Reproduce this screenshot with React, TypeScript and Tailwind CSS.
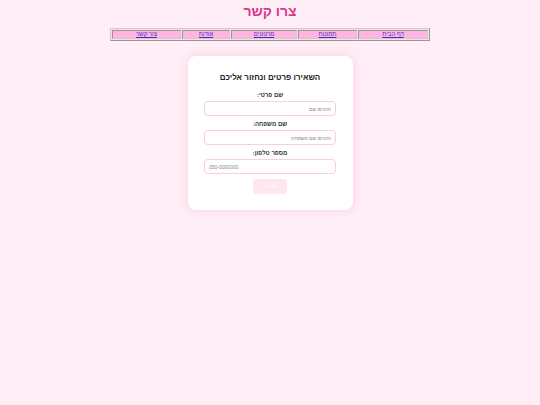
const links = [
  { label: "דף הבית", w: "w-[70px]" },
  { label: "תמונות", w: "w-[59px]" },
  { label: "סרטונים", w: "w-[66px]" },
  { label: "אודות", w: "w-[48px]" },
  { label: "צור קשר", w: "w-[69px]" },
];

const fields = [
  { label: "שם פרטי:", placeholder: "הכניסו שם", ltr: false },
  { label: "שם משפחה:", placeholder: "הכניסו שם משפחה", ltr: false },
  { label: "מספר טלפון:", placeholder: "050-0000000", ltr: true },
];

export default function App() {
  return (
    <div
      dir="rtl"
      className="min-h-[405px] w-full bg-[#ffeef6] font-['Liberation_Sans',Arial,sans-serif] text-black"
    >
      <h1 className="pt-[3px] text-center text-[14px] font-bold leading-[16px] text-[#d63a8c]">
        צרו קשר
      </h1>

      <div className="mt-[9px] flex justify-center">
        <table className="w-[320px] border-separate border-spacing-[1px] border border-t-[#d4c8ce] border-l-[#d4c8ce] border-b-[#9e9298] border-r-[#9e9298] bg-[#eee4ea]">
          <tbody>
            <tr>
              {links.map((l) => (
                <td
                  key={l.label}
                  className={`${l.w} h-[8px] border border-t-[#9e9298] border-l-[#9e9298] border-b-[#d4c8ce] border-r-[#d4c8ce] bg-[#ffb5df] p-0 text-center text-[6px] leading-[7px]`}
                >
                  <a href="#" className="text-[#4a2cc4] underline">
                    {l.label}
                  </a>
                </td>
              ))}
            </tr>
          </tbody>
        </table>
      </div>

      <div className="mt-[15px] flex justify-center">
        <div className="flex w-[165px] flex-col items-center rounded-[8px] bg-white px-[16px] pb-[16px] pt-[17px] shadow-[0_0_8px_rgba(255,170,210,0.5)]">
          <h2 className="text-[8px] font-bold leading-[10px] text-[#222]">
            השאירו פרטים ונחזור אליכם
          </h2>
          <div className="mt-[4px] flex w-full flex-col">
            {fields.map((f) => (
              <div key={f.label} className="flex flex-col items-center">
                <label className="mt-[4px] text-[6px] font-bold leading-[8px] text-[#333]">
                  {f.label}
                </label>
                <input
                  dir={f.ltr ? "ltr" : "rtl"}
                  placeholder={f.placeholder}
                  className={`mt-[2px] h-[15px] w-[132px] rounded-[4px] border border-[#f5d0e4] bg-white px-[4px] text-[5px] outline-none placeholder:text-[#888] ${f.ltr ? "text-left" : "text-right"}`}
                />
              </div>
            ))}
          </div>
          <button className="mt-[5px] h-[15px] w-[34px] rounded-[4px] bg-[#ffe6f1] text-[5px] text-white">
            שליחה
          </button>
        </div>
      </div>
    </div>
  );
}
